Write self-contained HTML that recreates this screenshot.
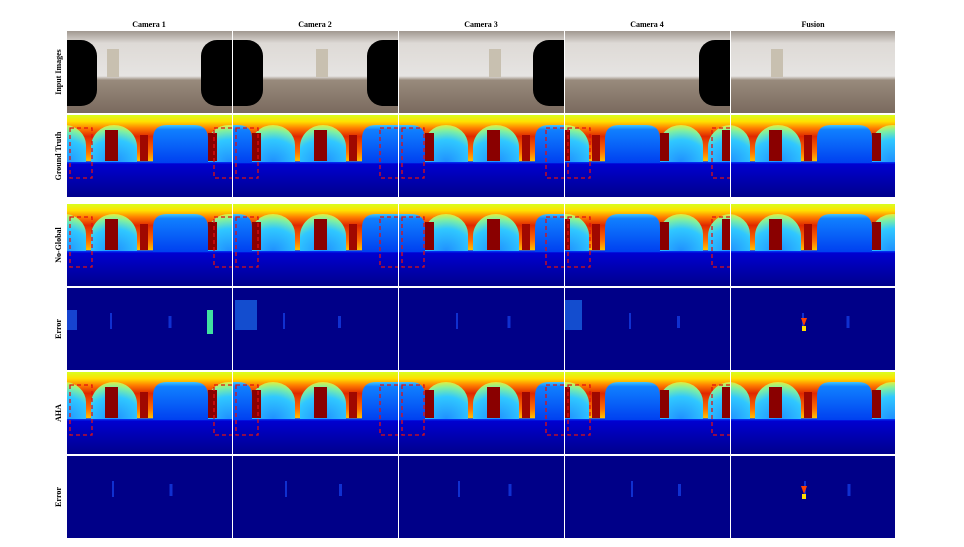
<!DOCTYPE html>
<html><head><meta charset="utf-8"><style>
html,body{margin:0;padding:0;background:#fff;width:964px;height:547px;overflow:hidden}
svg text{font-family:"Liberation Serif",serif;font-weight:bold;font-size:8px;fill:#000}
</style></head><body>
<svg id="fig" width="964" height="547" viewBox="0 0 964 547" xmlns="http://www.w3.org/2000/svg">
<defs>
<linearGradient id="bg" x1="0" y1="0" x2="0" y2="1">
<stop offset="0" stop-color="#d8ff20"/><stop offset="0.08" stop-color="#ffe000"/>
<stop offset="0.16" stop-color="#ff8000"/><stop offset="0.26" stop-color="#e02800"/>
<stop offset="0.45" stop-color="#ff7000"/><stop offset="0.56" stop-color="#ffc000"/>
<stop offset="0.57" stop-color="#0040ff"/><stop offset="0.6" stop-color="#0000d0"/>
<stop offset="1" stop-color="#00008c"/></linearGradient>
<radialGradient id="arch" cx="0.5" cy="1" r="1">
<stop offset="0" stop-color="#2090ff"/><stop offset="0.6" stop-color="#30c8ff"/>
<stop offset="0.85" stop-color="#80f0a0"/><stop offset="1" stop-color="#e0f040"/></radialGradient>
<linearGradient id="blue" x1="0" y1="0" x2="0" y2="1">
<stop offset="0" stop-color="#40c8ff"/><stop offset="0.12" stop-color="#1080ff"/>
<stop offset="1" stop-color="#0040f0"/></linearGradient>
<linearGradient id="wall" x1="0" y1="0" x2="0" y2="1">
<stop offset="0" stop-color="#a09890"/><stop offset="0.15" stop-color="#dedad6"/>
<stop offset="0.55" stop-color="#e6e4e2"/><stop offset="0.6" stop-color="#988a7c"/>
<stop offset="1" stop-color="#7a6a5e"/></linearGradient>
</defs>
<text x="149" y="27" text-anchor="middle">Camera 1</text>
<text x="315" y="27" text-anchor="middle">Camera 2</text>
<text x="481" y="27" text-anchor="middle">Camera 3</text>
<text x="647" y="27" text-anchor="middle">Camera 4</text>
<text x="813" y="27" text-anchor="middle">Fusion</text>
<text transform="translate(61,72) rotate(-90)" text-anchor="middle">Input Images</text>
<text transform="translate(61,156) rotate(-90)" text-anchor="middle">Ground Truth</text>
<text transform="translate(61,245) rotate(-90)" text-anchor="middle">No-Global</text>
<text transform="translate(61,329) rotate(-90)" text-anchor="middle">Error</text>
<text transform="translate(61,413) rotate(-90)" text-anchor="middle">AHA</text>
<text transform="translate(61,497) rotate(-90)" text-anchor="middle">Error</text>
<g id="panels"></g>
</svg>
<script>
var X=[67,233,399,565,731],Y=[31,115,204,288,372,456],S=[0,43,50,-46,0];
var blk=[[1,1],[1,1],[0,1],[0,1],[0,0]];
function pano(s){var o='';[-165,0,165].forEach(function(d){var t=s+d;
o+='<g transform="translate('+t+',0)">'+
'<path d="M24,47 L24,32 A23,22 0 0 1 70,32 L70,47Z" fill="url(#arch)"/>'+
'<path d="M140,47 L140,30 A22,20 0 0 1 184,30 L184,47Z" fill="url(#arch)"/>'+
'<rect x="38" y="15" width="13" height="31" fill="#8a0000"/>'+
'<rect x="73" y="20" width="8" height="26" fill="#a00800"/>'+
'<rect x="141" y="18" width="9" height="28" fill="#8a0000"/>'+
'<path d="M86,48 L86,24 Q86,10 100,10 L127,10 Q141,10 141,24 L141,48Z" fill="url(#blue)"/></g>';});return o;}
var h='';
for(var c=0;c<5;c++){var x=X[c],w=(c==4?164:165);
h+='<svg x="'+x+'" y="'+Y[0]+'" width="'+w+'" height="82"><rect width="165" height="82" fill="url(#wall)"/>';
h+='<rect x="'+(40+S[c]+165)%165+'" y="18" width="12" height="28" fill="#c8c0b0"/>';
if(blk[c][0])h+='<rect x="-20" y="9" width="50" height="66" rx="16" fill="#000"/>';
if(blk[c][1])h+='<rect x="134" y="9" width="50" height="66" rx="16" fill="#000"/>';
h+='</svg>';
[1,2,4].forEach(function(r){
h+='<svg x="'+x+'" y="'+Y[r]+'" width="'+w+'" height="82"><rect width="165" height="82" fill="url(#bg)"/>'+pano(S[c]);
if(c<4)h+='<rect x="3" y="13" width="22" height="50" fill="none" stroke="#e01010" stroke-width="1.3" stroke-dasharray="4,3"/>'+
'<rect x="147" y="13" width="30" height="50" fill="none" stroke="#e01010" stroke-width="1.3" stroke-dasharray="4,3"/>';
h+='</svg>';});
[3,5].forEach(function(r){
h+='<svg x="'+x+'" y="'+Y[r]+'" width="'+w+'" height="82"><rect width="165" height="82" fill="#000088"/>';
var k=(c*7+r)%60;
h+='<rect x="'+(40+k)+'" y="25" width="2" height="16" fill="#1030d0"/><rect x="'+(100+k/2)+'" y="28" width="3" height="12" fill="#1030d0"/>';
if(r==3&&c==0)h+='<rect x="0" y="22" width="10" height="20" fill="#2060f0" opacity="0.7"/><rect x="140" y="22" width="6" height="24" fill="#40e0a0"/>';
if(r==3&&(c==1||c==3))h+='<rect x="'+(c==1?2:-5)+'" y="12" width="22" height="30" fill="#2080ff" opacity="0.6"/>';
if(c==4)h+='<path d="M70,30 L76,30 L73,38Z" fill="#ff4000"/><rect x="71" y="38" width="4" height="5" fill="#ffe000"/>';
h+='</svg>';});
}
document.getElementById('panels').innerHTML=h;
</script>
</body></html>
